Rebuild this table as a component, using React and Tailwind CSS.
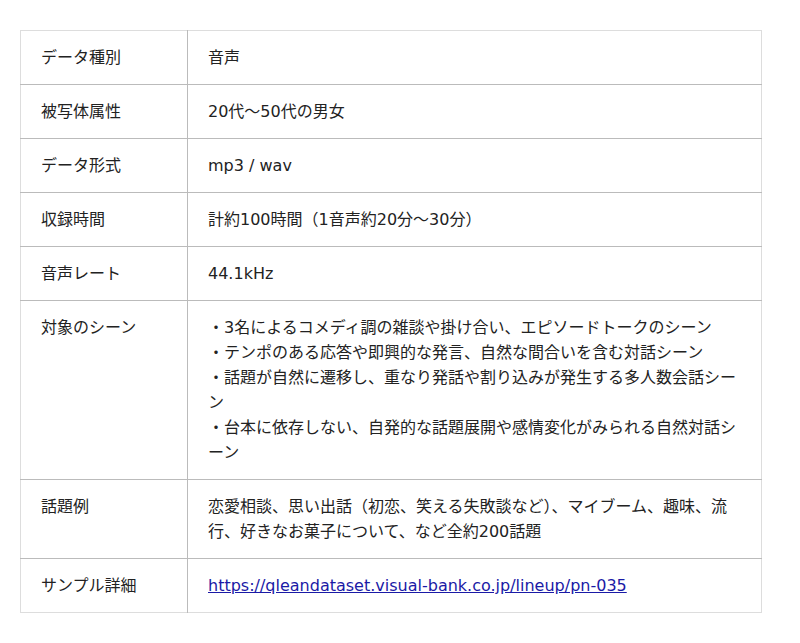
import React from 'react';

export default function App() {
  const rows = [
    { label: 'データ種別', value: '音声' },
    { label: '被写体属性', value: '20代〜50代の男女' },
    { label: 'データ形式', value: 'mp3 / wav' },
    { label: '収録時間', value: '計約100時間（1音声約20分〜30分）' },
    { label: '音声レート', value: '44.1kHz' },
    {
      label: '対象のシーン',
      value: [
        '・3名によるコメディ調の雑談や掛け合い、エピソードトークのシーン',
        '・テンポのある応答や即興的な発言、自然な間合いを含む対話シーン',
        '・話題が自然に遷移し、重なり発話や割り込みが発生する多人数会話シーン',
        '・台本に依存しない、自発的な話題展開や感情変化がみられる自然対話シーン',
      ],
    },
    {
      label: '話題例',
      value: '恋愛相談、思い出話（初恋、笑える失敗談など）、マイブーム、趣味、流行、好きなお菓子について、など全約200話題',
    },
  ];

  return (
    <div className="min-h-[643px] bg-white pt-[30px] pl-[20px] font-['DejaVu_Sans','Noto_Sans_CJK_JP',sans-serif] text-[16px] leading-[25px] text-[#222]">
      <table className="w-[742px] border-collapse border border-[#ddd]">
        <tbody>
          {rows.map((row) => (
            <tr key={row.label} className="border-b border-[#bbb]">
              <td className="w-[167px] border-r border-[#bbb] px-[20px] py-[14px] align-top">{row.label}</td>
              <td className="px-[20px] py-[14px] align-top">
                {Array.isArray(row.value)
                  ? row.value.map((line) => <div key={line}>{line}</div>)
                  : row.value}
              </td>
            </tr>
          ))}
          <tr className="border-b border-[#ddd]">
            <td className="w-[167px] border-r border-[#bbb] px-[20px] py-[14px] align-top">サンプル詳細</td>
            <td className="px-[20px] py-[14px] align-top">
              <a href="#" className="text-[#1a1aa6] underline">https://qleandataset.visual-bank.co.jp/lineup/pn-035</a>
            </td>
          </tr>
        </tbody>
      </table>
    </div>
  );
}
